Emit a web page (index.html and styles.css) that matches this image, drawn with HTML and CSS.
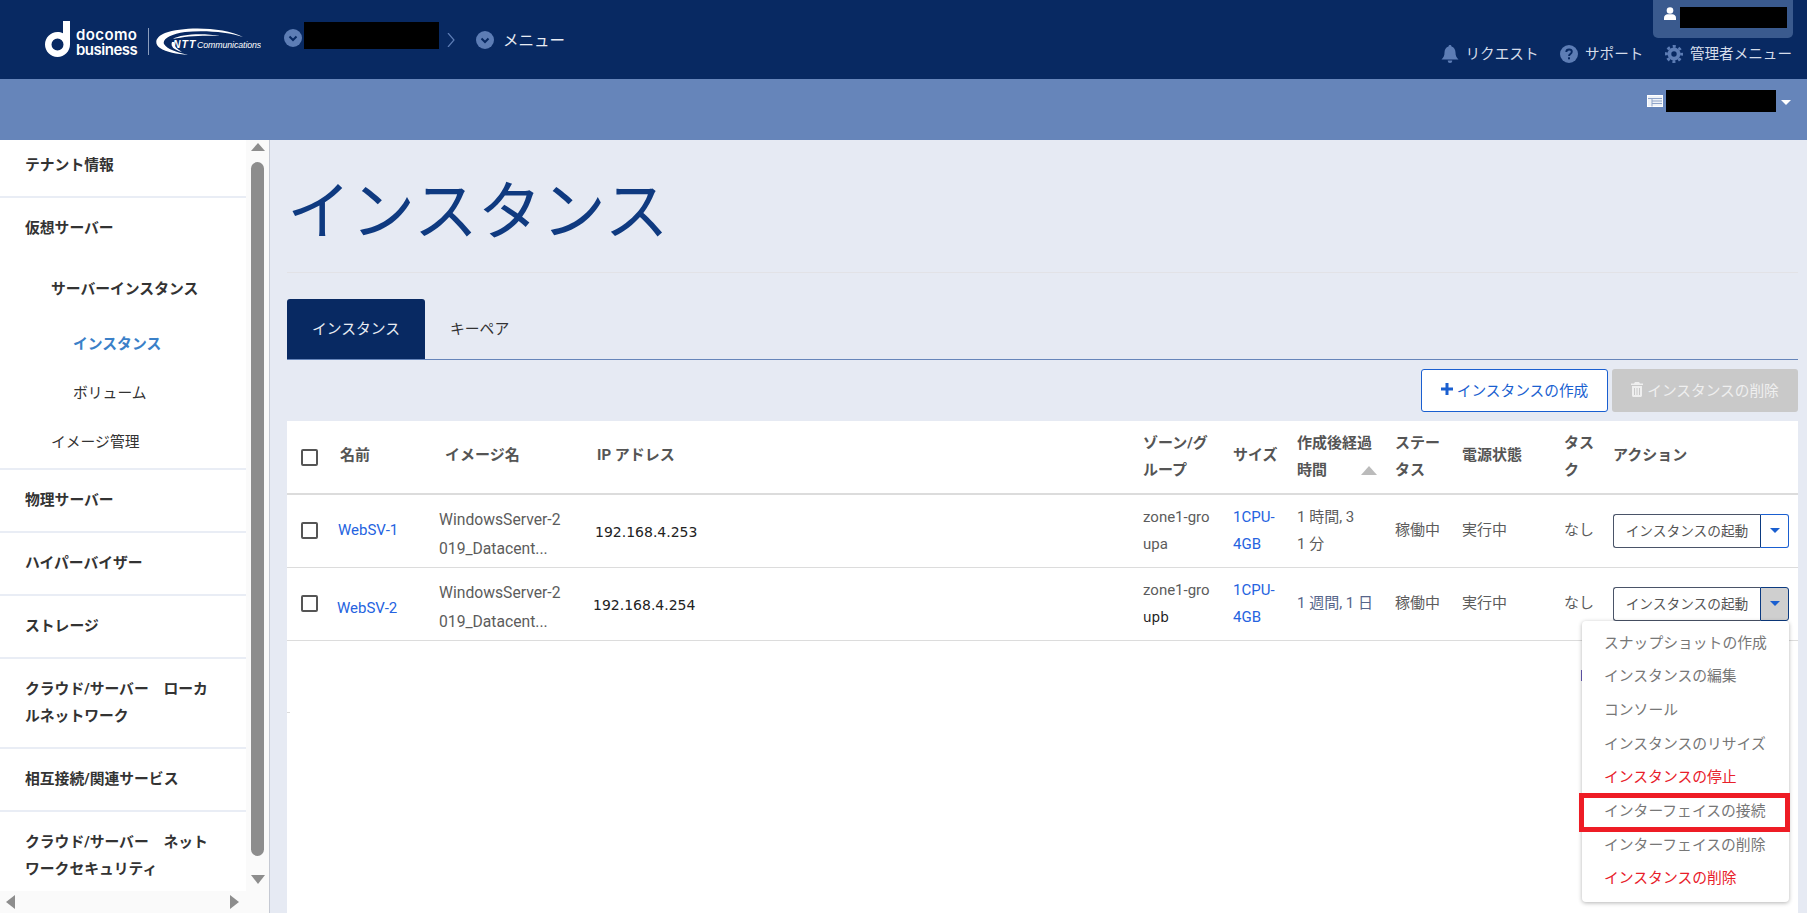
FILE: index.html
```html
<!DOCTYPE html>
<html lang="ja">
<head>
<meta charset="utf-8">
<title>インスタンス</title>
<link rel="stylesheet" href="styles.css">
</head>
<body>
<header class="topbar">
  <div class="brand">
    <svg class="d-mark" viewBox="0 0 25 36" width="25" height="36"><path fill="#fff" fill-rule="evenodd" d="M18 0h7v23.500C25 30.400 19.400 36 12.500 36S0 30.400 0 23.500 5.600 11 12.500 11c2 0 3.900.5 5.500 1.300V0zM12.500 17.500a6 6 0 1 0 0 12 6 6 0 0 0 0-12z"/></svg>
    <div class="brand-words"><span class="w-docomo">docomo</span><span class="w-business">business</span></div>
    <i class="brand-sep"></i>
    <svg class="ntt" viewBox="0 0 105 28" width="105" height="28">
      <path fill="#fff" d="M87 9C68-1 28-2 9 5-1 9-2 16 4 20c6 4 17 6 28 7-12-3-21-6-24-11C6 11 15 6 29 4c20-2 43 0 58 5z"/>
      <path fill="#fff" d="M16 14c-2 5 3 8 10 10-5-3-8-6-8-10zM17 11c8-5 30-6 47-3-16-1-35 0-47 3z"/>
      <text x="17" y="19.500" class="ntt-big">NTT</text>
      <text x="41" y="19.500" class="ntt-small">Communications</text>
    </svg>
  </div>
  <nav class="crumbs">
    <svg class="crumb-dot" viewBox="0 0 18 18" width="18" height="18"><circle cx="9" cy="9" r="9" fill="#5d7db5"/><path d="M5.500 7.500 9 11l3.500-3.500" fill="none" stroke="#082962" stroke-width="2"/></svg>
    <span class="redact crumb-redact"></span>
    <svg class="crumb-chev" viewBox="0 0 8 14" width="8" height="14"><path d="M1 0l6 7-6 7" fill="none" stroke="#5d7db5" stroke-width="1.200"/></svg>
    <svg class="crumb-dot crumb-dot-low" viewBox="0 0 18 18" width="18" height="18"><circle cx="9" cy="9" r="9" fill="#5d7db5"/><path d="M5.500 7.500 9 11l3.500-3.500" fill="none" stroke="#082962" stroke-width="2"/></svg>
    <span class="crumb-text">メニュー</span>
  </nav>
  <div class="top-right">
    <div class="userbox">
      <svg viewBox="0 0 12 13" width="12" height="13"><circle cx="6" cy="3.500" r="3.300" fill="#fff"/><path fill="#fff" d="M0 13v-2c0-2.500 2-3.700 3.500-3.700h5C10 7.300 12 8.500 12 11v2z"/></svg>
      <span class="redact user-redact"></span>
    </div>
    <div class="toplinks">
      <a class="toplink">
        <svg viewBox="0 0 18 18" width="18" height="18"><path fill="#5d7db5" d="M9 0c1 0 1.500.7 1.500 1.500C13 2.200 14.500 4.500 14.500 7.500c0 3.500 1 4.800 3 7H.5c2-2.200 3-3.500 3-7 0-3 1.500-5.300 4-6C7.500.7 8 0 9 0zM6.800 15.500h4.400A2.200 2.200 0 0 1 9 18a2.200 2.200 0 0 1-2.200-2.500z"/></svg>
        <span>リクエスト</span>
      </a>
      <a class="toplink">
        <svg viewBox="0 0 18 18" width="18" height="18"><circle cx="9" cy="9" r="9" fill="#5d7db5"/><path d="M6.300 7c0-1.600 1.200-2.500 2.800-2.500 1.500 0 2.700.9 2.700 2.300 0 2.200-2.800 2.100-2.800 4.200" fill="none" stroke="#082962" stroke-width="1.900"/><rect x="8" y="12.300" width="2" height="2" fill="#082962"/></svg>
        <span>サポート</span>
      </a>
      <a class="toplink">
        <svg viewBox="0 0 18 18" width="18" height="18"><circle cx="9" cy="9" r="4.600" fill="none" stroke="#5d7db5" stroke-width="3.800"/><circle cx="9" cy="9" r="7.600" fill="none" stroke="#5d7db5" stroke-width="2.800" stroke-dasharray="3 2.970" stroke-dashoffset="1.500"/></svg>
        <span>管理者メニュー</span>
      </a>
    </div>
  </div>
</header>

<div class="subbar">
  <svg viewBox="0 0 16 12" width="16" height="12"><rect x=".5" y=".5" width="15" height="11" fill="#eef2f8" stroke="#fff"/><path d="M1 3.500h14M5 6h10M5 8.500h10M5 3.500v8" stroke="#8fa4c9" fill="none"/></svg>
  <span class="redact project-redact"></span>
  <i class="sub-caret"></i>
</div>

<main class="layout">
  <aside class="sidebar">
    <div class="side-col">
      <nav class="side-nav">
        <section class="side-sec first"><a class="side-head">テナント情報</a></section>
        <section class="side-sec">
          <a class="side-head">仮想サーバー</a>
          <a class="side-sub strong gap-a">サーバーインスタンス</a>
          <a class="side-leaf active gap-b">インスタンス</a>
          <a class="side-leaf gap-c">ボリューム</a>
          <a class="side-sub gap-d">イメージ管理</a>
        </section>
        <section class="side-sec"><a class="side-head">物理サーバー</a></section>
        <section class="side-sec"><a class="side-head">ハイパーバイザー</a></section>
        <section class="side-sec"><a class="side-head">ストレージ</a></section>
        <section class="side-sec"><a class="side-head">クラウド/サーバー　ローカ<br>ルネットワーク</a></section>
        <section class="side-sec"><a class="side-head">相互接続/関連サービス</a></section>
        <section class="side-sec"><a class="side-head">クラウド/サーバー　ネット<br>ワークセキュリティ</a></section>
      </nav>
      <div class="hscroll"><i class="arrow-left"></i><i class="arrow-right"></i></div>
    </div>
    <div class="vscroll"><i class="arrow-up"></i><i class="thumb"></i><i class="arrow-down"></i></div>
  </aside>

  <div class="content">
    <h1 class="page-title">インスタンス</h1>
    <div class="tabs">
      <a class="tab current">インスタンス</a>
      <a class="tab">キーペア</a>
    </div>
    <div class="toolbar">
      <button class="btn btn-create">
        <svg viewBox="0 0 12 12" width="12" height="12"><path d="M4.500 0h3v4.500H12v3H7.500V12h-3V7.500H0v-3h4.500z" fill="#1a5fd0"/></svg>
        インスタンスの作成
      </button>
      <button class="btn btn-delete">
        <svg viewBox="0 0 12 15" width="12" height="15"><path fill="#efefef" d="M4 0h4l1 1.500h3V3H0V1.500h3zM1 4h10v9.500c0 .8-.7 1.500-1.500 1.500h-7C1.700 15 1 14.300 1 13.500zm2 2v7h1V6zm2.500 0v7h1V6zM8 6v7h1V6z"/></svg>
        インスタンスの削除
      </button>
    </div>
    <div class="table-wrap">
      <table class="grid">
        <colgroup>
          <col class="c-check"><col class="c-name"><col class="c-image"><col class="c-ip"><col class="c-zone"><col class="c-size"><col class="c-age"><col class="c-status"><col class="c-power"><col class="c-task"><col class="c-action">
        </colgroup>
        <thead>
          <tr>
            <th><i class="check"></i></th>
            <th class="th-one th-shift">名前</th>
            <th class="th-one th-image">イメージ名</th>
            <th class="th-one">IP アドレス</th>
            <th>ゾーン/グ<br>ループ</th>
            <th class="th-one">サイズ</th>
            <th>作成後経過<br>時間<i class="sort"></i></th>
            <th>ステー<br>タス</th>
            <th class="th-one">電源状態</th>
            <th>タス<br>ク</th>
            <th class="th-one">アクション</th>
          </tr>
        </thead>
        <tbody>
          <tr>
            <td><i class="check"></i></td>
            <td><a class="link">WebSV-1</a></td>
            <td class="tall">WindowsServer-2<br>019_Datacent...</td>
            <td class="ip">192.168.4.253</td>
            <td>zone1-gro<br>upa</td>
            <td><a class="link">1CPU-<br>4GB</a></td>
            <td>1 時間, 3<br>1 分</td>
            <td class="jp-up">稼働中</td>
            <td class="jp-up">実行中</td>
            <td>なし</td>
            <td>
              <div class="split"><span class="split-main">インスタンスの起動</span><span class="split-caret"><i></i></span></div>
            </td>
          </tr>
          <tr>
            <td><i class="check"></i></td>
            <td class="name-low"><a class="link">WebSV-2</a></td>
            <td class="tall">WindowsServer-2<br>019_Datacent...</td>
            <td class="ip ip-left">192.168.4.254</td>
            <td>zone1-gro<br><span class="edited">upb</span></td>
            <td><a class="link">1CPU-<br>4GB</a></td>
            <td><span class="age-week">1 週間, 1 日</span></td>
            <td class="jp-up">稼働中</td>
            <td class="jp-up">実行中</td>
            <td>なし</td>
            <td class="action-open">
              <div class="split"><span class="split-main">インスタンスの起動</span><span class="split-caret open"><i></i></span></div>
              <ul class="menu">
                <li>スナップショットの作成</li>
                <li>インスタンスの編集</li>
                <li>コンソール</li>
                <li>インスタンスのリサイズ</li>
                <li class="danger">インスタンスの停止</li>
                <li>インターフェイスの接続</li>
                <li>インターフェイスの削除</li>
                <li class="danger">インスタンスの削除</li>
                <li class="callout" aria-hidden="true"></li>
              </ul>
            </td>
          </tr>
          <tr class="empty-row"><td colspan="11"></td></tr>
        </tbody>
      </table>
    </div>
  </div>
</main>
</body>
</html>
```
FILE: styles.css
```css
* { box-sizing: border-box; }
html, body { margin: 0; padding: 0; }
body {
  width: 1807px;
  height: 913px;
  overflow: hidden;
  display: flex;
  flex-direction: column;
  font-family: Roboto, "Noto Sans CJK JP", sans-serif;
  font-size: 15px;
  color: #555;
  background: #e6eaf3;
}
i { display: block; }
.redact { display: block; background: #000; }

/* top bar */
.topbar {
  height: 79px;
  flex: none;
  background: #082962;
  display: flex;
  align-items: flex-start;
  padding-left: 45px;
}
.brand { display: flex; align-items: flex-start; padding-top: 21px; width: 239px; flex: none; }
.d-mark { flex: none; }
.brand-words {
  margin: 2px 0 0 6px;
  display: flex;
  flex-direction: column;
  font-family: Inter, Roboto, sans-serif;
  font-weight: 600;
  color: #fff;
  font-size: 15px;
  line-height: 15px;
  width: 64px;
  padding-top: 4px;
  white-space: nowrap;
}
.w-docomo { letter-spacing: .4px; }
.w-business { letter-spacing: -.5px; }
.brand-sep { width: 1px; height: 27px; background: #8b9dbd; margin: 7px 8px 0 8px; }
.ntt { margin-top: 7px; flex: none; margin-left: -1px; }
.ntt-big { font: italic 900 10.500px "Liberation Sans", sans-serif; fill: #fff; letter-spacing: 1px; }
.ntt-small { font: italic 400 8.800px "Liberation Sans", sans-serif; fill: #fff; letter-spacing: -.1px; }

.crumbs { display: flex; align-items: flex-start; flex: none; width: 282px; }
.crumb-dot { margin-top: 29px; flex: none; }
.crumb-dot-low { margin-top: 31px; margin-left: 21px; }
.crumb-redact { width: 135px; height: 27px; margin: 22px 0 0 2px; }
.crumb-chev { margin: 33px 0 0 8px; flex: none; }
.crumb-text { margin: 30px 0 0 9px; color: #e8ecf3; font-size: 15.500px; line-height: 22px; }

.top-right { margin-left: auto; width: 355px; margin-right: 14px; height: 79px; display: flex; flex-direction: column; align-items: flex-end; }
.userbox {
  width: 140px;
  height: 38px;
  background: #3a5a8e;
  border-radius: 0 0 5px 5px;
  display: flex;
  align-items: flex-start;
  padding: 7px 0 0 11px;
}
.user-redact { width: 107px; height: 21px; margin-left: 4px; }
.toplinks { display: flex; margin-top: 5px; width: 352px; }
.toplink { display: flex; align-items: center; color: #d5dce9; font-size: 14.600px; line-height: 22px; gap: 6.500px; margin-right: 22px; }
.toplink:last-child { margin-right: 0; }
.toplink span { white-space: nowrap; }

/* sub bar */
.subbar {
  height: 61px;
  flex: none;
  background: #6685ba;
  display: flex;
  align-items: flex-start;
  justify-content: flex-end;
  padding: 11px 16px 0 0;
}
.subbar svg { margin-top: 5px; }
.project-redact { width: 110px; height: 22px; margin-left: 3px; }
.sub-caret {
  width: 0; height: 0;
  margin: 10px 0 0 5px;
  border-left: 5px solid transparent;
  border-right: 5px solid transparent;
  border-top: 5px solid #fff;
}

/* layout */
.layout { flex: 1; display: flex; min-height: 0; }

/* sidebar */
.sidebar { width: 270px; flex: none; display: flex; background: #fff; border-right: 1px solid #c5c9d3; }
.side-col { width: 246px; display: flex; flex-direction: column; }
.side-nav { flex: 1; overflow: hidden; min-height: 0; }
.side-sec { padding: 17px 0 17px 25px; border-bottom: 2px solid #e9edf5; }
.side-sec:last-child { border-bottom: 0; }
.side-sec.first { padding-top: 12px; padding-bottom: 17px; }
.side-head, .side-sub, .side-leaf { display: block; line-height: 27px; color: #333; white-space: nowrap; font-size: 14.800px; }
.side-head { font-weight: 700; }
.side-sub { padding-left: 26px; }
.side-sub.strong { font-weight: 700; }
.side-leaf { padding-left: 48px; }
.side-leaf.active { color: #3a80c8; font-weight: 700; }
.gap-a { margin-top: 34px; }
.gap-b { margin-top: 28px; }
.gap-c { margin-top: 22px; }
.gap-d { margin-top: 22px; margin-bottom: -5px; }

.hscroll { height: 22px; flex: none; background: #fafafa; display: flex; justify-content: space-between; align-items: center; padding: 0 7px 0 6px; }
.arrow-left { width: 0; height: 0; border-top: 7px solid transparent; border-bottom: 7px solid transparent; border-right: 9px solid #8d8d8d; }
.arrow-right { width: 0; height: 0; border-top: 7px solid transparent; border-bottom: 7px solid transparent; border-left: 9px solid #8d8d8d; }

.vscroll { width: 23px; flex: none; background: #fafafa; padding: 3px 5px 0 5px; display: flex; flex-direction: column; align-items: center; }
.arrow-up { width: 0; height: 0; border-left: 7px solid transparent; border-right: 7px solid transparent; border-bottom: 8px solid #8d8d8d; }
.thumb { width: 13px; height: 694px; margin-top: 11px; background: #8d8d8d; border-radius: 7px; }
.arrow-down { width: 0; height: 0; margin-top: 19px; border-left: 7px solid transparent; border-right: 7px solid transparent; border-top: 9px solid #8d8d8d; }

/* content */
.content { flex: 1; min-width: 0; display: flex; flex-direction: column; padding: 0 9px 0 17px; }
.page-title {
  margin: 0;
  padding: 31px 0 17px;
  font-size: 64px;
  line-height: 84px;
  font-weight: 400;
  color: #0f3a80;
  border-bottom: 1px solid #e2e2e6;
  height: 133px;
  white-space: nowrap;
}
.tabs { display: flex; margin-top: 26px; border-bottom: 1px solid #6685ba; flex: none; }
.tab { height: 60px; line-height: 60px; padding: 0 25px; color: #333; font-size: 14.800px; }
.tab.current { background: #082962; color: #e8ecf3; border-radius: 3px 3px 0 0; width: 138px; text-align: center; padding: 0; }

.toolbar { display: flex; justify-content: flex-end; gap: 4px; margin: 9px 0; flex: none; }
.btn {
  height: 43px;
  border-radius: 3px;
  font: 14.700px Roboto, "Noto Sans CJK JP", sans-serif;
  display: flex;
  align-items: center;
  justify-content: center;
  gap: 4px;
  padding: 0 0 3px;
  white-space: nowrap;
}
.btn-create { width: 187px; background: #fff; border: 1px solid #1a5fd0; color: #1a5fd0; }
.btn-delete { width: 186px; background: #c9c9c9; border: 0; color: #efefef; }

/* table */
.table-wrap { flex: 1; min-height: 0; background: #fff; }
.grid { width: 1511px; border-collapse: collapse; table-layout: fixed; }
.c-check { width: 51px; }
.c-name { width: 101px; }
.c-image { width: 158px; }
.c-ip { width: 546px; }
.c-zone { width: 90px; }
.c-size { width: 64px; }
.c-age { width: 98px; }
.c-status { width: 67px; }
.c-power { width: 102px; }
.c-task { width: 49px; }
.c-action { width: 185px; }
.grid th, .grid td { padding: 0; vertical-align: middle; text-align: left; }
.grid th { height: 73px; border-bottom: 2px solid #dcdcdc; font-size: 15px; font-weight: 700; line-height: 27px; color: #555; }
.grid th.th-one { padding-bottom: 3px; }
.grid td { height: 73px; border-bottom: 1px solid #dcdcdc; font-size: 15px; line-height: 27px; color: #5c5c5c; }
.grid th:first-child, .grid td:first-child { padding-left: 14px; }
.grid .th-shift { padding-left: 2px; }
.grid .th-image { padding-left: 6px; }
.check { width: 17px; height: 17px; border: 2px solid #555; border-radius: 2px; background: #fff; }
.link { color: #2563e0; }
.grid td.tall { line-height: 29px; font-size: 15.700px; padding-top: 7px; }
.grid td.ip { font-family: "DejaVu Sans", sans-serif; font-size: 14px; color: #222; padding-top: 4px; text-indent: -2px; }
.grid td.ip-left { padding-top: 3px; text-indent: -4px; }
.grid td.name-low { padding-top: 9px; text-indent: -1px; }
.grid td.jp-up { padding-bottom: 1px; }
.age-week { color: #56658a; }
.edited { font-family: "DejaVu Sans", sans-serif; color: #222; font-size: 13.500px; }
.sort {
  display: inline-block;
  width: 0; height: 0;
  margin-left: 34px;
  border-left: 8.500px solid transparent;
  border-right: 8.500px solid transparent;
  border-bottom: 9px solid #bbb;
}
.grid tr.empty-row td {
  border-bottom: 0;
  background: linear-gradient(#dcdcdc, #dcdcdc) no-repeat left bottom / 3px 1px;
}
.split { display: flex; width: 176px; height: 34px; }
.split-main {
  width: 147px;
  border: 1px solid #4a5468;
  border-right: 0;
  border-radius: 3px 0 0 3px;
  background: #fff;
  font-size: 13.700px;
  line-height: 32px;
  text-align: center;
  color: #555;
  white-space: nowrap;
}
.split-caret {
  width: 29px;
  border: 1px solid #1a5fd0;
  border-left: 1.500px solid #0b3a80;
  border-radius: 0 3px 3px 0;
  display: flex;
  align-items: center;
  justify-content: center;
}
.split-caret i { width: 0; height: 0; border-left: 5px solid transparent; border-right: 5px solid transparent; border-top: 5px solid #1a5fd0; }
.split-caret.open { background: #cfcfcf; border-color: #0b3a80; }
.action-open { position: relative; }
.menu {
  position: absolute;
  top: 53px;
  right: 9px;
  width: 207px;
  height: 281px;
  margin: 0;
  padding: 6px 0 0;
  list-style: none;
  background: #fff;
  border-radius: 4px;
  box-shadow: 0 1px 4px rgba(0, 0, 0, .3);
  z-index: 2;
}
.menu::before {
  content: "";
  position: absolute;
  left: -1px;
  top: 49px;
  width: 1px;
  height: 11px;
  background: #5a4fa0;
}
.menu li { height: 33.700px; line-height: 33.700px; padding-left: 22px; color: #777; font-size: 14.800px; white-space: nowrap; }
.menu li.danger { color: #e8202a; }
.menu li.callout {
  position: absolute;
  top: 172px;
  left: -3px;
  width: 211px;
  height: 39px;
  padding: 0;
  border: 5px solid #ee1c25;
}
```
